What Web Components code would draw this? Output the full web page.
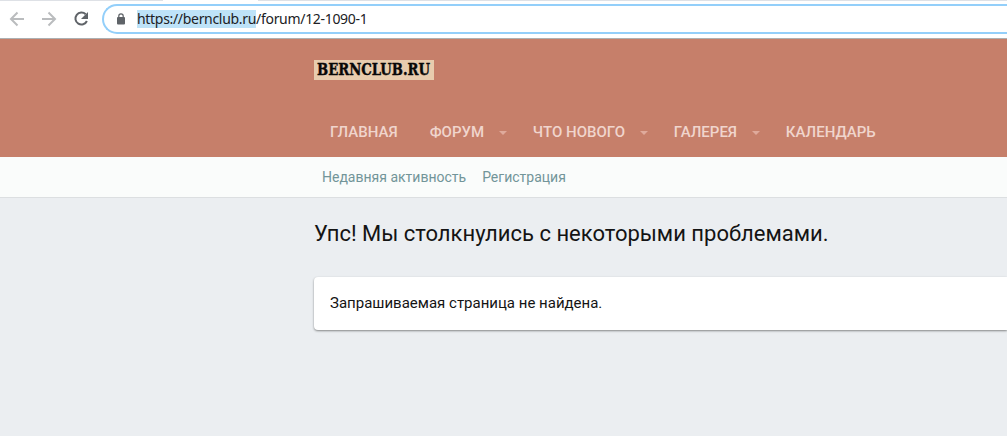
<!DOCTYPE html>
<html lang="ru">
<head>
<meta charset="utf-8">
<title>BERNCLUB.RU</title>
<style>
    body {
        margin: 0;
        height: 436px;
        overflow: hidden;
        background-color: #ebeef1;
        font-family: Roboto, sans-serif;
        --color-header: #c67f6a;
        --color-subnav: #fafcfb;
        --color-text: #141414;
        --color-link: #729599;
        --page-left: 314px;
    }
</style>
</head>
<body>
<browser-bar host="https://bernclub.ru" path="/forum/12-1090-1"></browser-bar>
<forum-header>
    <site-logo slot="logo">BERNCLUB.RU</site-logo>
    <nav-item>ГЛАВНАЯ</nav-item>
    <nav-item menu>ФОРУМ</nav-item>
    <nav-item menu>ЧТО НОВОГО</nav-item>
    <nav-item menu>ГАЛЕРЕЯ</nav-item>
    <nav-item>КАЛЕНДАРЬ</nav-item>
</forum-header>
<sub-nav>
    <span>Недавняя активность</span>
    <span>Регистрация</span>
</sub-nav>
<error-page>
    <span slot="title">Упс! Мы столкнулись с некоторыми проблемами.</span>
    Запрашиваемая страница не найдена.
</error-page>

<script>
class BrowserBar extends HTMLElement {
    constructor() {
        super()
        this.attachShadow({ mode: 'open' })
        this.render()
    }

    render() {
        this.shadowRoot.innerHTML = /*html*/`
            <style>
                :host {
                    display: flex;
                    box-sizing: border-box;
                    height: 39px;
                    padding-top: 3px;
                    border-bottom: 1px solid #adb0b2;
                    background: linear-gradient(to right, #dee1e6 163px, #fff 163px, #fff 258px, #dee1e6 258px) top / 100% 1px no-repeat #fff;
                }

                .buttons {
                    display: flex;
                    align-items: center;
                    gap: 12px;
                    height: 32px;
                    padding-left: 7px;
                    width: 95px;
                    box-sizing: border-box;
                    flex: none;
                }

                svg {
                    display: block;
                    flex: none;
                }

                .address {
                    display: flex;
                    align-items: center;
                    box-sizing: border-box;
                    flex: 1;
                    height: 30px;
                    margin: 1px 0 0 7px;
                    padding-left: 12px;
                    border: 2px solid #93cffa;
                    border-right: none;
                    border-radius: 15px 0 0 15px;
                    background-color: #fff;
                }

                .url {
                    display: flex;
                    margin-left: 11px;
                    font: 14px/18px "Noto Sans", sans-serif;
                    color: #202124;
                    white-space: nowrap;
                    letter-spacing: -0.31px;
                }

                .host {
                    background-color: #bee3f8;
                }
            </style>
            <div class="buttons">
                <svg width="20" height="20" viewBox="0 0 20 20" fill="none" stroke="#babcbe" stroke-width="2"><path d="M17 10H4M10.500 3.500L4 10l6.500 6.500"/></svg>
                <svg width="20" height="20" viewBox="0 0 20 20" fill="none" stroke="#babcbe" stroke-width="2"><path d="M3 10h13M9.500 3.500L16 10l-6.500 6.500"/></svg>
                <svg width="20" height="20" viewBox="0 0 20 20"><path d="M14.700 5.300A6 6 0 1 0 15.900 12" fill="none" stroke="#5f6368" stroke-width="2"/><path d="M17 3v7h-7z" fill="#5f6368"/></svg>
            </div>
            <div class="address">
                <svg width="10" height="12" viewBox="0 0 10 12"><rect x="1" y="4" width="8" height="7.500" rx="1" fill="#5f6368"/><path d="M2.800 4.500V3a2.200 2.200 0 0 1 4.400 0v1.500" fill="none" stroke="#5f6368" stroke-width="1.200"/></svg>
                <div class="url"><span class="host">${this.getAttribute("host")}</span><span class="path">${this.getAttribute("path")}</span></div>
            </div>
        `
    }
}

class SiteLogo extends HTMLElement {
    constructor() {
        super()
        this.attachShadow({ mode: 'open' })
        this.shadowRoot.innerHTML = /*html*/`
            <style>
                :host {
                    display: flex;
                    justify-content: center;
                    width: 120px;
                    height: 20px;
                    background-color: #e8ccae;
                    color: #080808;
                    font: bold 16px/20px "DejaVu Serif", serif;
                    -webkit-text-stroke: 0.4px #080808;
                    white-space: nowrap;
                }

                span {
                    flex: none;
                    transform: scaleX(0.825);
                }
            </style>
            <span><slot></slot></span>
        `
    }
}

class ForumHeader extends HTMLElement {
    constructor() {
        super()
        this.attachShadow({ mode: 'open' })
        this.shadowRoot.innerHTML = /*html*/`
            <style>
                :host {
                    display: flex;
                    flex-direction: column;
                    justify-content: space-between;
                    box-sizing: border-box;
                    height: 118px;
                    padding: 21px 0 0 var(--page-left);
                    background-color: var(--color-header);
                }

                nav {
                    display: flex;
                    height: 50px;
                }
            </style>
            <slot name="logo"></slot>
            <nav><slot></slot></nav>
        `
    }
}

class NavItem extends HTMLElement {
    constructor() {
        super()
        this.attachShadow({ mode: 'open' })
        this.shadowRoot.innerHTML = /*html*/`
            <style>
                :host {
                    display: flex;
                    align-items: center;
                    height: 50px;
                    padding: 0 16px;
                    color: #f0d5cd;
                    font-size: 15px;
                    font-weight: 500;
                    white-space: nowrap;
                }

                :host([menu]) {
                    padding-right: 10px;
                }

                .arrow {
                    display: none;
                    margin: 1px 0 0 14.8px;
                    border: solid transparent;
                    border-width: 4px 4px 0;
                    border-top-color: #dfaa9b;
                }

                :host([menu]) .arrow {
                    display: block;
                }
            </style>
            <slot></slot>
            <span class="arrow"></span>
        `
    }
}

class SubNav extends HTMLElement {
    constructor() {
        super()
        this.attachShadow({ mode: 'open' })
        this.shadowRoot.innerHTML = /*html*/`
            <style>
                :host {
                    display: flex;
                    align-items: center;
                    gap: 16px;
                    height: 40px;
                    padding-left: calc(var(--page-left) + 8px);
                    border-bottom: 1px solid #dcdfe1;
                    background-color: var(--color-subnav);
                    color: var(--color-link);
                    font-size: 14px;
                    white-space: nowrap;
                }
            </style>
            <slot></slot>
        `
    }
}

class ErrorPage extends HTMLElement {
    constructor() {
        super()
        this.attachShadow({ mode: 'open' })
        this.shadowRoot.innerHTML = /*html*/`
            <style>
                :host {
                    display: block;
                    padding: 20px 0 0 var(--page-left);
                    color: var(--color-text);
                }

                h1 {
                    margin: 0 0 28px;
                    font-size: 22px;
                    font-weight: 400;
                    line-height: 31px;
                    white-space: nowrap;
                }

                .message {
                    box-sizing: border-box;
                    height: 53px;
                    padding: 16px;
                    border-radius: 4px 0 0 4px;
                    background-color: #fff;
                    box-shadow: 0 1px 3px rgba(0, 0, 0, 0.12), 0 1px 2px rgba(0, 0, 0, 0.34);
                    font-size: 15px;
                    line-height: 21px;
                }
            </style>
            <h1><slot name="title"></slot></h1>
            <div class="message"><slot></slot></div>
        `
    }
}

customElements.define('browser-bar', BrowserBar)
customElements.define('site-logo', SiteLogo)
customElements.define('forum-header', ForumHeader)
customElements.define('nav-item', NavItem)
customElements.define('sub-nav', SubNav)
customElements.define('error-page', ErrorPage)
</script>
</body>
</html>
